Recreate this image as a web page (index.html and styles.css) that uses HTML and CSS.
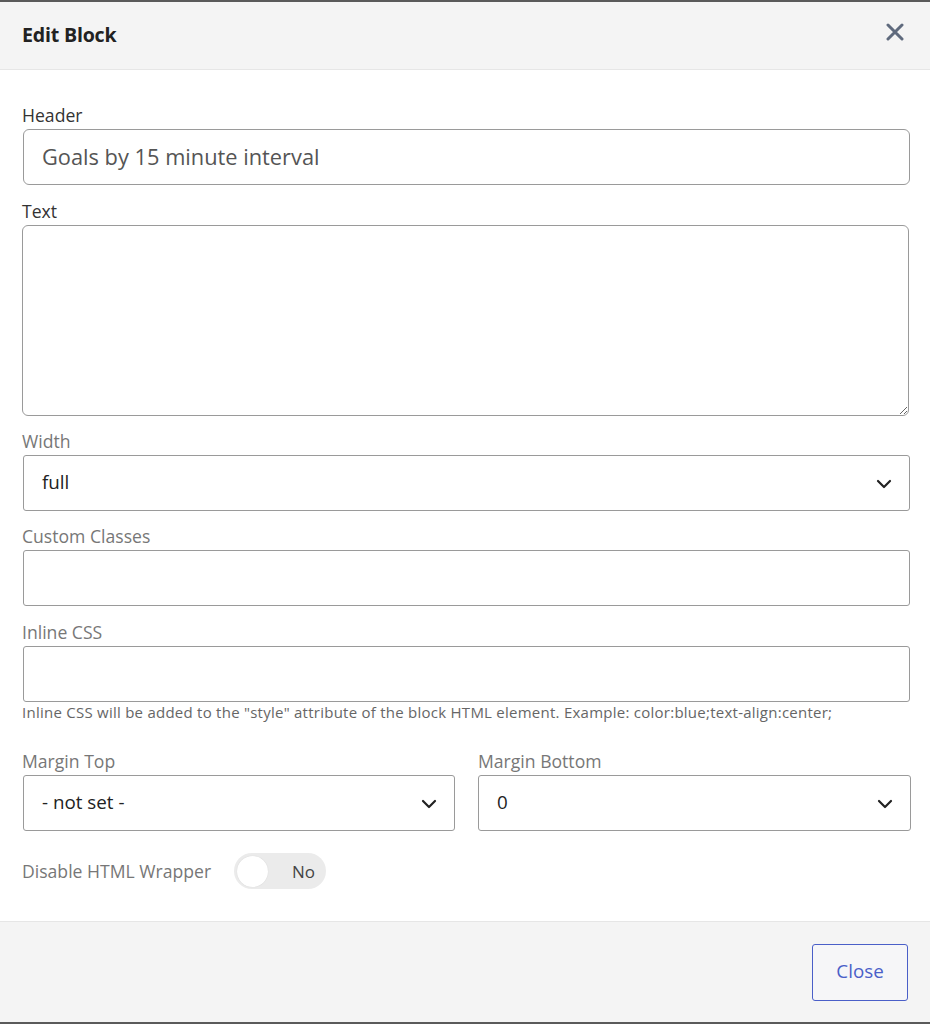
FILE: index.html
```html
<!DOCTYPE html>
<html>
<head>
<meta charset="utf-8">
<link rel="stylesheet" href="styles.css">
</head>
<body>
<div class="modal">
  <div class="modal-header">
    <h2 class="modal-title">Edit Block</h2>
    <button class="close-x" aria-label="Close">
      <svg width="18" height="18" viewBox="0 0 18 18"><path d="M2 2 L16 16 M16 2 L2 16" stroke="#5f6a7d" stroke-width="3" stroke-linecap="round" fill="none"/></svg>
    </button>
  </div>
  <div class="modal-body">
    <div class="field">
      <label class="label dark">Header</label>
      <div class="input header-input">Goals by 15 minute interval</div>
    </div>
    <div class="field">
      <label class="label dark">Text</label>
      <textarea class="textarea"></textarea>
    </div>
    <div class="field">
      <label class="label">Width</label>
      <div class="input select"><span>full</span><svg class="chev" width="16" height="10" viewBox="0 0 16 10"><path d="M2 2 L8 8 L14 2" stroke="#222" stroke-width="2.2" fill="none" stroke-linecap="round" stroke-linejoin="round"/></svg></div>
    </div>
    <div class="field custom-field">
      <label class="label">Custom Classes</label>
      <div class="input"></div>
    </div>
    <div class="field help-field">
      <label class="label">Inline CSS</label>
      <div class="input"></div>
      <p class="help">Inline CSS will be added to the "style" attribute of the block HTML element. Example: color:blue;text-align:center;</p>
    </div>
    <div class="row">
      <div class="field">
        <label class="label">Margin Top</label>
        <div class="input select"><span>- not set -</span><svg class="chev" width="16" height="10" viewBox="0 0 16 10"><path d="M2 2 L8 8 L14 2" stroke="#222" stroke-width="2.2" fill="none" stroke-linecap="round" stroke-linejoin="round"/></svg></div>
      </div>
      <div class="field">
        <label class="label">Margin Bottom</label>
        <div class="input select"><span>0</span><svg class="chev" width="16" height="10" viewBox="0 0 16 10"><path d="M2 2 L8 8 L14 2" stroke="#222" stroke-width="2.2" fill="none" stroke-linecap="round" stroke-linejoin="round"/></svg></div>
      </div>
    </div>
    <div class="toggle-row">
      <span class="label">Disable HTML Wrapper</span>
      <div class="toggle"><span class="knob"></span><span class="toggle-text">No</span></div>
    </div>
  </div>
  <div class="modal-footer">
    <button class="btn-close">Close</button>
  </div>
</div>
</body>
</html>
```

FILE: styles.css
```css
* { box-sizing: border-box; }
html, body { margin: 0; padding: 0; background: #ffffff; }
body {
  font-family: "Open Sans", "Noto Sans", sans-serif;
  color: #333;
}
.modal {
  width: 930px;
  height: 1024px;
  border-top: 2px solid #5a5a5a;
  border-bottom: 2px solid #5a5a5a;
  display: flex;
  flex-direction: column;
}
.modal-header {
  height: 68px;
  background: #f4f4f4;
  border-bottom: 1px solid #e6e6e6;
  display: flex;
  align-items: center;
  justify-content: space-between;
  padding: 0 26px 0 22px;
}
.modal-title {
  margin: 0;
  font-size: 19.6px;
  font-weight: 700;
  color: #222;
  letter-spacing: -0.2px;
  margin-top: -2px;
}
.close-x {
  border: 0;
  background: transparent;
  padding: 0;
  margin-top: -8px;
  display: flex;
}
.modal-body {
  flex: 1;
  padding: 33px 20px 0 22px;
}
.field { margin-bottom: 13px; }
.field:first-child { margin-bottom: 14px; }
.custom-field { margin-bottom: 14px; }
.label {
  display: block;
  font-size: 17.6px;
  line-height: 24px;
  color: #777;
  margin-bottom: 2px;
}
.label.dark { color: #333; }
.input {
  height: 56px;
  margin-left: 1px;
  border: 1.5px solid #9a9a9a;
  border-radius: 3px;
  background: #fff;
  display: flex;
  align-items: center;
  padding: 0 18px;
  font-size: 18.8px;
  color: #222;
}
.header-input {
  border-radius: 6px;
  font-size: 21.8px;
  color: #555;
  padding-bottom: 2px;
}
.textarea {
  display: block;
  width: 887px;
  height: 191px;
  border: 1.5px solid #9a9a9a;
  border-radius: 6px;
  resize: vertical;
  font-family: inherit;
  margin: 0;
}
.select { justify-content: space-between; padding-right: 17px; padding-bottom: 2px; }
.chev { display: block; margin-top: 4px; }
.help-field { margin-bottom: 0; }
.help {
  margin: 1px 0 0 0;
  font-size: 15px;
  letter-spacing: 0.25px;
  line-height: 18px;
  color: #666;
  white-space: nowrap;
}
.row {
  display: grid;
  grid-template-columns: 1fr 1fr;
  column-gap: 23px;
  margin-top: 28px;
  margin-right: -1px;
}
.row .field { margin-bottom: 22px; }
.row .field:last-child .input { margin-left: 0; }
.toggle-row {
  display: flex;
  align-items: center;
  gap: 23px;
}
.toggle-row .label { margin: 0; }
.toggle {
  width: 92px;
  height: 36px;
  border-radius: 18px;
  background: #ebebeb;
  display: flex;
  align-items: center;
  padding: 0 11px 0 3px;
  justify-content: space-between;
}
.knob {
  width: 31px;
  height: 31px;
  border-radius: 50%;
  background: #fff;
  box-shadow: 0 0 1px rgba(0,0,0,0.15);
}
.toggle-text { font-size: 17px; color: #444; }
.modal-footer {
  height: 101px;
  background: #f4f4f4;
  border-top: 1px solid #e6e6e6;
  display: flex;
  align-items: flex-start;
  justify-content: flex-end;
  padding: 22px 22px 0 0;
}
.btn-close {
  width: 96px;
  height: 57px;
  border: 1.5px solid #4a5fc8;
  border-radius: 3px;
  color: #4a5fc8;
  font-family: inherit;
  font-size: 18.8px;
  background: #f6f6f8;
  padding-bottom: 5px;
}
```
